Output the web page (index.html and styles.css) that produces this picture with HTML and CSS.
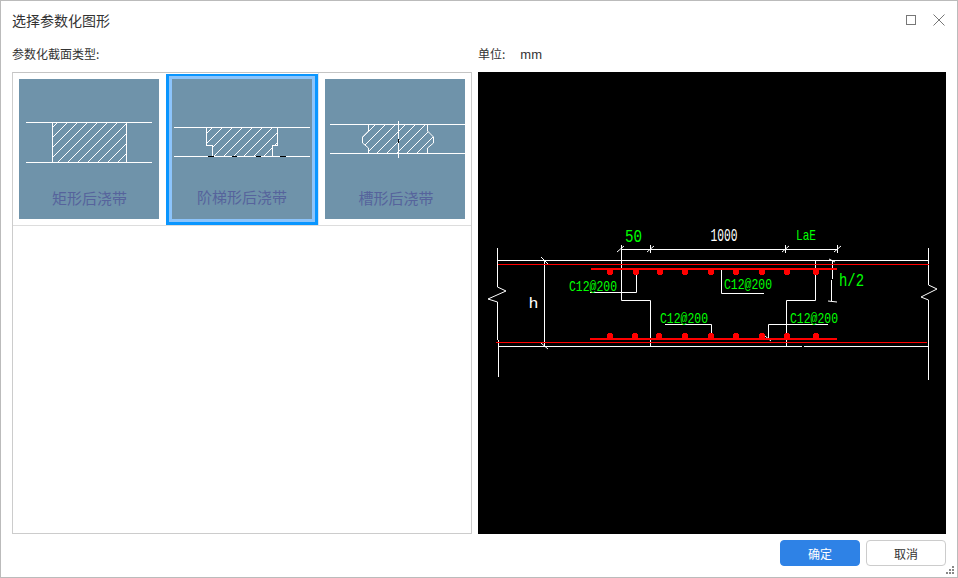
FILE: index.html
```html
<!DOCTYPE html>
<html lang="zh-CN">
<head>
    <meta charset="UTF-8">
    <meta name="viewport" content="width=device-width, initial-scale=1.0">
    <title>选择参数化图形</title>
    <link rel="stylesheet" href="styles.css">
</head>
<body>

<div class="dialog">
    <div class="title-bar">
        <span class="title">选择参数化图形</span>
        <div class="window-buttons">
            <svg class="window-icon" viewBox="0 0 12 12"><rect x="1.5" y="1.5" width="9" height="9"/></svg>
            <svg class="window-icon" viewBox="0 0 12 12"><path d="M0.5 0.5L11.5 11.5M11.5 0.5L0.5 11.5"/></svg>
        </div>
    </div>

    <div class="columns">
        <div class="column-label">参数化截面类型:</div>
        <div class="column-label">单位:<span class="unit">mm</span></div>

        <!-- Section type list -->
        <div class="type-list">
            <div class="type-row">
                <div class="type-cell">
                    <div class="thumb">
                        <svg class="thumb-svg" viewBox="19 79 140 140">
                            <defs>
                                <pattern id="hatch" width="10" height="10" patternUnits="userSpaceOnUse">
                                    <path d="M0 10L10 0" class="hatch-line"/>
                                </pattern>
                            </defs>
                            <rect x="52.5" y="122.5" width="74" height="40" fill="url(#hatch)"/>
                            <path class="thumb-line" d="M26 122.5H152M26 162.5H152M52.5 122V163M126.5 122V163"/>
                            <text class="thumb-text" x="89.5" y="203.5" text-anchor="middle">矩形后浇带</text>
                        </svg>
                    </div>
                </div>
                <div class="type-cell selected">
                    <div class="thumb">
                        <svg class="thumb-svg" viewBox="172 79 140 140">
                            <path fill="url(#hatch)" d="M206.5 127.5H277.5V145.5H272.5V156.5H212.5V145.5H206.5Z"/>
                            <path class="thumb-line" d="M174 127.5H310M174 156.5H310M206.5 127V145.5H212.5V156M277.5 127V145.5H272.5V156"/>
                            <path class="thumb-mark" d="M208 156.5H214M232 156.5H237M256 156.5H261M280 156.5H286"/>
                            <text class="thumb-text" x="242" y="202.5" text-anchor="middle">阶梯形后浇带</text>
                        </svg>
                    </div>
                </div>
                <div class="type-cell last">
                    <div class="thumb">
                        <svg class="thumb-svg" viewBox="325 79 140 140">
                            <path fill="url(#hatch)" d="M368.5 124.5H427.5V131L433.5 137V143L427.5 148V153.5H368.5V148L362.5 143V137L368.5 131Z"/>
                            <path class="thumb-line" d="M330 124.5H465M330 153.5H465M398.5 121V158"/>
                            <path class="thumb-thin" d="M368.5 124.5V131L362.5 137V143L368.5 148V153.5M427.5 124.5V131L433.5 137V143L427.5 148V153.5"/>
                            <path class="thumb-mark" d="M398.5 139V143"/>
                            <text class="thumb-text" x="396" y="203.5" text-anchor="middle">槽形后浇带</text>
                        </svg>
                    </div>
                </div>
            </div>
        </div>

        <!-- CAD preview, drawn in page coordinates -->
        <div class="preview">
            <svg class="preview-svg" viewBox="478 72 468 462">
                <defs>
                    <path id="rebar" d="M-2-3H2V-2H3V2H2V3H-2V2H-3V-2H-2Z"/>
                </defs>

                <g class="cad-white">
                    <path d="M497.5 248V287L506 291L488 299L497.5 302V340M498.5 340V377"/>
                    <path d="M928.5 248V285L937 289L921 297L928.5 300V380"/>
                    <path d="M497 260.5H928M498 346.5H802M804 346.5H928"/>
                    <path d="M544.5 261V346M541 257L548 264M541 343L548 349"/>
                    <path d="M621 249.5H838M621.5 245V253M650.5 245V253M785.5 245V253M837.5 245V253"/>
                    <path d="M617 252L624 246M647 252L654 246M782 252L789 246M834 252L841 246"/>
                    <path d="M621.5 250V300.5H650.5V346"/>
                    <path d="M815.5 261V300.5H786.5V346"/>
                    <path d="M590 292.5H636.5V270"/>
                    <path d="M721.5 268V293.5H764"/>
                    <path d="M665 324.5H711.5V336"/>
                    <path d="M828 324.5H768.5V339M765 336L771 341"/>
                    <path d="M832.5 260V279M831.5 280V301M829 259L835 262M828 301L837 302"/>
                </g>

                <g class="cad-red">
                    <path d="M498 264.5H929M496 342.5H927"/>
                </g>
                <g class="cad-bar">
                    <path d="M591 269H837M590 339H837"/>
                </g>
                <g class="cad-dots">
                    <use href="#rebar" x="609.5" y="271.5"/>
                    <use href="#rebar" x="635.5" y="271.5"/>
                    <use href="#rebar" x="659.5" y="271.5"/>
                    <use href="#rebar" x="684.5" y="271.5"/>
                    <use href="#rebar" x="710.5" y="271.5"/>
                    <use href="#rebar" x="735.5" y="271.5"/>
                    <use href="#rebar" x="761.5" y="271.5"/>
                    <use href="#rebar" x="786.5" y="271.5"/>
                    <use href="#rebar" x="815.5" y="271.5"/>
                    <use href="#rebar" x="609.5" y="335.5"/>
                    <use href="#rebar" x="634.5" y="335.5"/>
                    <use href="#rebar" x="658.5" y="335.5"/>
                    <use href="#rebar" x="684.5" y="335.5"/>
                    <use href="#rebar" x="710.5" y="335.5"/>
                    <use href="#rebar" x="735.5" y="335.5"/>
                    <use href="#rebar" x="761.5" y="335.5"/>
                    <use href="#rebar" x="786.5" y="335.5"/>
                    <use href="#rebar" x="815.5" y="335.5"/>
                </g>

                <text class="cad-text green big" x="625" y="242" textLength="17" lengthAdjust="spacingAndGlyphs">50</text>
                <text class="cad-text white big" x="710.5" y="241" textLength="27" lengthAdjust="spacingAndGlyphs">1000</text>
                <text class="cad-text green" x="796" y="240" textLength="20" lengthAdjust="spacingAndGlyphs">LaE</text>
                <text class="cad-text white" x="528.5" y="307.5" textLength="10" lengthAdjust="spacingAndGlyphs">h</text>
                <text class="cad-text green big" x="839" y="286" textLength="25" lengthAdjust="spacingAndGlyphs">h/2</text>
                <text class="cad-text green" x="569" y="290.5" textLength="48" lengthAdjust="spacingAndGlyphs">C12@200</text>
                <text class="cad-text green" x="724" y="288.5" textLength="48" lengthAdjust="spacingAndGlyphs">C12@200</text>
                <text class="cad-text green" x="660" y="322.5" textLength="48" lengthAdjust="spacingAndGlyphs">C12@200</text>
                <text class="cad-text green" x="790" y="322.5" textLength="48" lengthAdjust="spacingAndGlyphs">C12@200</text>
            </svg>
        </div>
    </div>

    <div class="footer">
        <button class="btn btn-primary" type="button">确定</button>
        <button class="btn" type="button">取消</button>
    </div>

    <svg class="grip" viewBox="0 0 8 8">
        <rect x="6" y="0" width="2" height="2"/>
        <rect x="3" y="3" width="2" height="2"/>
        <rect x="6" y="3" width="2" height="2"/>
        <rect x="0" y="6" width="2" height="2"/>
        <rect x="3" y="6" width="2" height="2"/>
        <rect x="6" y="6" width="2" height="2"/>
    </svg>
</div>

</body>
</html>
```

FILE: styles.css
```css
body {
    margin: 0;
    background-color: #fff;
    font-family: "Noto Sans CJK SC", "Liberation Sans", sans-serif;
    color: #333;
}
.dialog {
    position: relative;
    box-sizing: border-box;
    width: 958px;
    height: 578px;
    border: 1px solid #bbb;
    display: flex;
    flex-direction: column;
    background-color: #fff;
}
.title-bar {
    height: 38px;
    padding: 0 12px 0 11px;
    display: flex;
    align-items: center;
    justify-content: space-between;
}
.title {
    font-size: 14px;
}
.window-buttons {
    display: flex;
    align-items: center;
    gap: 16px;
}
.window-icon {
    width: 12px;
    height: 12px;
    fill: none;
    stroke: #777;
    stroke-width: 1;
}
.columns {
    padding: 0 11px;
    display: grid;
    grid-template-columns: 460px 468px;
    grid-template-rows: 33px 462px;
    column-gap: 6px;
}
.column-label {
    font-size: 12px;
    line-height: 30px;
}
.unit {
    margin-left: 15px;
    font-family: "Liberation Sans", sans-serif;
    font-size: 13px;
}
.type-list {
    box-sizing: border-box;
    border: 1px solid #ccc;
    border-top-color: #c4c4c4;
    background-color: #fff;
}
.type-row {
    display: grid;
    grid-template-columns: 153px 152px 153px;
    border-bottom: 1px solid #ddd;
}
.type-cell {
    box-sizing: border-box;
    height: 152px;
    padding: 6px;
}
.type-cell.selected {
    margin-top: 1px;
    height: 151px;
    padding: 0;
    border: 3px solid #0a96ff;
    border-top-width: 2px;
}
.type-cell.selected .thumb {
    border: 3px solid #8cc4fb;
}
.type-cell.last {
    border-left: 1px solid #d9e6f2;
}
.thumb {
    width: 140px;
    height: 140px;
    background-color: #6f93aa;
}
.thumb-svg {
    display: block;
    width: 140px;
    height: 140px;
}
.hatch-line {
    stroke: #fff;
    stroke-width: 1;
    fill: none;
}
.thumb-line {
    fill: none;
    stroke: #fff;
    stroke-width: 1;
    shape-rendering: crispEdges;
}
.thumb-thin {
    fill: none;
    stroke: #fff;
    stroke-width: 1;
}
.thumb-mark {
    fill: none;
    stroke: #000;
    stroke-width: 1;
    shape-rendering: crispEdges;
}
.thumb-text {
    font-size: 15px;
    fill: #56639c;
}
.preview {
    background-color: #000;
}
.preview-svg {
    display: block;
    width: 468px;
    height: 462px;
}
.cad-white {
    fill: none;
    stroke: #fff;
    stroke-width: 1;
}
.cad-red {
    fill: none;
    stroke: #f00;
    stroke-width: 1;
    shape-rendering: crispEdges;
}
.cad-bar {
    fill: none;
    stroke: #f00;
    stroke-width: 2;
    shape-rendering: crispEdges;
}
.cad-dots {
    fill: #f00;
    shape-rendering: crispEdges;
}
.cad-text {
    font-family: "Liberation Mono", monospace;
    font-size: 15px;
}
.cad-text.big {
    font-size: 18px;
}
.green {
    fill: #0f0;
}
.white {
    fill: #fff;
}
.footer {
    padding: 6px 11px 0 0;
    display: flex;
    justify-content: flex-end;
    gap: 6px;
}
.btn {
    width: 80px;
    height: 26px;
    padding: 0;
    border: 1px solid #ccc;
    border-radius: 4px;
    background-color: #fff;
    color: #333;
    font-family: inherit;
    font-size: 12px;
}
.btn-primary {
    background-color: #2e82e6;
    border-color: #2e82e6;
    color: #fff;
}
.grip {
    position: absolute;
    right: 3px;
    bottom: 3px;
    width: 8px;
    height: 8px;
    fill: #888;
}
```
